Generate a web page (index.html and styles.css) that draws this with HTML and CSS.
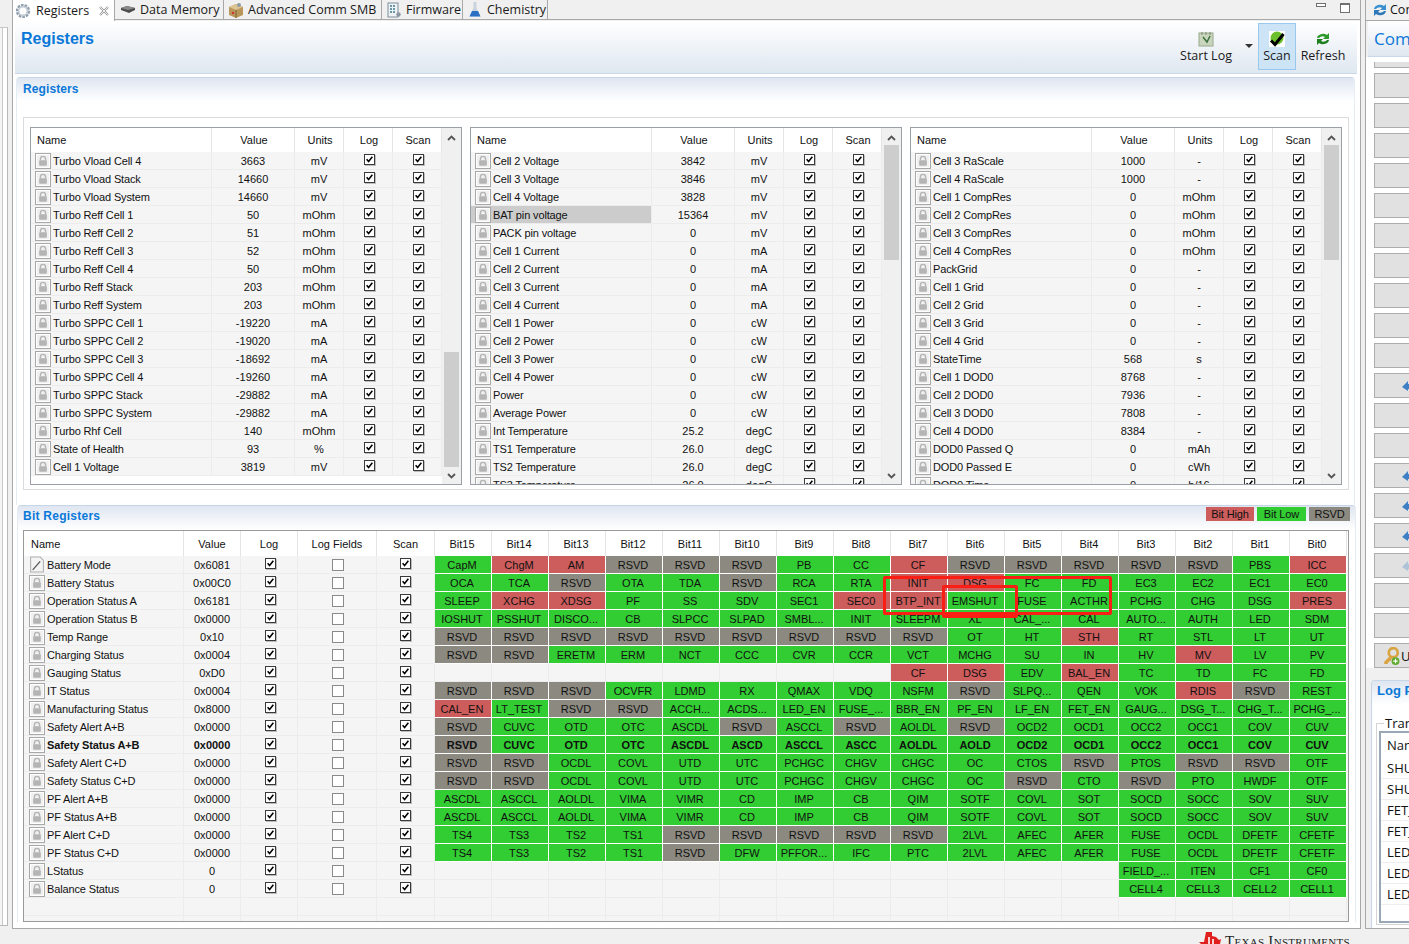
FILE: index.html
```html
<!DOCTYPE html>
<html lang="en">
<head>
<meta charset="utf-8">
<title>Registers</title>
<link rel="stylesheet" href="styles.css">
</head>
<body>
<svg class="defs" width="0" height="0">
  <symbol id="lock" viewBox="0 0 14 14"><path d="M4 6.5V4.6a3 3 0 0 1 6 0v1.9" fill="none" stroke="#b4b4b4" stroke-width="1.6"/><rect x="2.5" y="6" width="9" height="6.5" rx="1" fill="#b4b4b4"/></symbol>
  <symbol id="pencil" viewBox="0 0 14 16"><path d="M1 1h9l3 3v11H1z" fill="#f4f4f4" stroke="#b0b0b0"/><path d="M3 13 10 5" stroke="#555" stroke-width="1.2"/></symbol>
  <symbol id="tick" viewBox="0 0 11 11"><path d="M2 5.2 4.4 8 9 2.2" fill="none" stroke="#000" stroke-width="1.9"/></symbol>
  <symbol id="chev" viewBox="0 0 9 6"><path d="M1 5 4.5 1.5 8 5" fill="none" stroke="#555" stroke-width="1.8"/></symbol>
  <symbol id="arrow" viewBox="0 0 12 12"><path d="M1 7 7 1v3h5v5H7v2z" fill="#3f7fc4"/></symbol>
</svg>
<div class="app">
  <div class="workspace">
    <aside class="stub"><div class="stub-box"></div></aside>

    <main class="editor">
      <nav class="tabbar">
        <div class="tab tab-active tab-w1">
          <svg class="tab-icon" viewBox="0 0 16 16"><circle cx="8" cy="8" r="5.6" fill="none" stroke="#8a9aa8" stroke-width="3" stroke-dasharray="2.4 1"/><circle cx="8" cy="8" r="4.4" fill="none" stroke="#c3ccd4" stroke-width="1.6"/></svg>
          <span>Registers</span>
          <svg class="tab-close" viewBox="0 0 10 10"><path d="M1 1l8 8M9 1 1 9" stroke="#9a9a9a" stroke-width="2.2" fill="none"/><path d="M1 1l8 8M9 1 1 9" stroke="#fff" stroke-width=".8" fill="none"/></svg>
        </div>
        <div class="tab tab-w2">
          <svg class="tab-icon" viewBox="0 0 16 16"><path d="M1 6l6-2 8 2v2l-6 3-8-3z" fill="#4c4c4c"/><path d="M1 6l6-2 8 2-7 2z" fill="#8a8a8a"/></svg>
          <span>Data Memory</span>
        </div>
        <div class="tab tab-w3">
          <svg class="tab-icon" viewBox="0 0 16 16"><path d="M1 5l7-3 7 3v8l-7 3-7-3z" fill="#b9975b"/><path d="M1 5l7 3 7-3-7-3z" fill="#dcc592"/><path d="M8 8v8" stroke="#7d6232"/><circle cx="11" cy="3" r="2" fill="#8e9aa5"/><circle cx="5" cy="11" r="1.2" fill="#c33"/></svg>
          <span>Advanced Comm SMB</span>
        </div>
        <div class="tab tab-w4">
          <svg class="tab-icon" viewBox="0 0 16 16"><rect x="2" y="1" width="10" height="14" fill="#eef2f5" stroke="#7f8e9b"/><path d="M4 4h6M4 7h6M4 10h6" stroke="#3b7a8f" stroke-width="1.4" stroke-dasharray="2 1"/><circle cx="12.5" cy="12.5" r="2.2" fill="#8a97a3"/></svg>
          <span>Firmware</span>
        </div>
        <div class="tab tab-w5">
          <svg class="tab-icon" viewBox="0 0 16 16"><path d="M6.5 0h3v6l4 8.500H2.500l4-8.500z" fill="#c9d3dd"/><path d="M5 9h6l2.500 5.500h-11z" fill="#2a6fc4"/></svg>
          <span>Chemistry</span>
        </div>
        <div class="tabbar-fill">
          <span class="win-min"></span>
          <span class="win-max"></span>
        </div>
      </nav>

      <div class="pane">
        <header class="page-head">
          <h1 class="page-title">Registers</h1>
          <div class="toolbar">
            <div class="tool tool-log">
              <svg class="tool-icon" viewBox="0 0 16 16"><rect x="1" y="2" width="14" height="13" fill="#c9d6bd" stroke="#98a88c"/><path d="M4 1v3M8 1v3M12 1v3" stroke="#7b8a70"/><path d="M5 6l4 5 3-6" fill="none" stroke="#3c6f3c" stroke-width="1.5"/></svg>
              <span>Start Log</span>
            </div>
            <div class="tool-drop"></div>
            <div class="tool tool-on">
              <svg class="tool-icon" viewBox="0 0 16 16"><rect width="16" height="16" fill="#fff"/><circle cx="8" cy="7" r="6.500" fill="#6cc02a"/><path d="M2 9.500 6 13.500 14.500 3" fill="none" stroke="#000" stroke-width="3"/></svg>
              <span>Scan</span>
            </div>
            <div class="tool tool-refresh">
              <svg class="tool-icon" viewBox="0 0 16 16"><path d="M2 7a6 4.500 0 0 1 10-3l2-2v6H8l2-2a4 3 0 0 0-6 1z" fill="#2b9a2b"/><path d="M14 9a6 4.500 0 0 1-10 3l-2 2V8h6l-2 2a4 3 0 0 0 6-1z" fill="#1f7f1f"/></svg>
              <span>Refresh</span>
            </div>
          </div>
        </header>

        <section class="panel panel-reg">
          <div class="panel-title"><h2>Registers</h2></div>
          <div class="reg-box" id="regBox"></div>
        </section>

        <section class="panel panel-bit">
          <div class="panel-title">
            <h2>Bit Registers</h2>
            <div class="legend">
              <span class="chip chip-high red">Bit High</span>
              <span class="chip chip-low green">Bit Low</span>
              <span class="chip chip-rsvd grey">RSVD</span>
            </div>
          </div>
          <div class="bit-table" id="bitTable"></div>
        </section>
      </div>
    </main>

    <aside class="side">
      <div class="side-tabbar">
        <svg class="side-tab-icon" viewBox="0 0 16 16"><path d="M2 7a6 5 0 0 1 10-3l2-2v6H8l2-2a4 3 0 0 0-6 1z" fill="#3a8fd0"/><path d="M14 9a6 5 0 0 1-10 3l-2 2V8h6l-2 2a4 3 0 0 0 6-1z" fill="#2c78b8"/></svg>
        <span>Commands</span>
      </div>
      <div class="side-head">Commands</div>
      <div class="cmd-list" id="cmdList"></div>
      <section class="log-panel">
        <div class="log-title">Log Panel</div>
        <div class="log-group">
          <span class="log-legend">Transaction Log</span>
          <div class="log-table" id="logTable"></div>
        </div>
      </section>
    </aside>
  </div>

  <footer class="footer">
    <svg class="ti-logo" viewBox="0 0 22 20"><path d="M7 0h6v4l4 1 3 3 2-1-1 5-5 4-1 4-4-3-2-4-3-1-2 2-4-4h5z" fill="#e0201c"/><path d="M10 5v9M14 7v7" stroke="#fff" stroke-width="1.600"/></svg>
    <span class="ti-name">Texas Instruments</span>
  </footer>

  <div class="mark mark-wide"></div>
  <div class="mark mark-narrow"></div>
</div>
<script src="script.js"></script>
</body>
</html>
```
FILE: styles.css
```css
* { box-sizing: border-box; }
html, body { margin: 0; height: 100%; }
body {
  width: 1409px;
  height: 944px;
  overflow: hidden;
  background: #f0f0f0;
  font-family: "Liberation Sans", Arial, sans-serif;
  font-size: 11px;
  color: #111;
}
.defs { position: absolute; }
.app { position: relative; width: 1409px; height: 944px; overflow: hidden; }
.workspace { display: flex; height: 929px; }

/* left stub */
.stub { width: 12px; flex: none; padding-top: 27px; }
.stub-box { width: 8px; height: 899px; background: #f5f5f5; border-right: 1px solid #b8b8b8; border-bottom: 1px solid #b8b8b8; border-top: 1px solid #c8c8c8; box-shadow: inset -4px 0 0 #fff, inset -5px 0 0 #c8c8c8; }

/* editor */
.editor { width: 1349px; flex: none; display: flex; flex-direction: column; border-left: 1px solid #a8a8a8; border-right: 1px solid #a8a8a8; border-bottom: 1px solid #a8a8a8; }
.tabbar { display: flex; height: 21px; flex: none; font-family: "Open Sans", "Liberation Sans", sans-serif; font-size: 12.5px; color: #1a1a1a; }
.tab { display: flex; align-items: center; height: 20px; background: #f0f0f0; border-right: 1px solid #a8a8a8; border-bottom: 1px solid #a8a8a8; padding-left: 4px; flex: none; white-space: nowrap; }
.tab-active { background: #fff; height: 21px; border-bottom: 0; padding-left: 2px; }
.tab-w1 { width: 102px; }
.tab-w2 { width: 109px; padding-left: 5px; }
.tab-w3 { width: 158px; }
.tab-w4 { width: 81px; }
.tab-w5 { width: 85px; }
.tab-icon { width: 16px; height: 16px; margin-right: 4px; flex: none; }
.tab-active .tab-icon { margin-right: 5px; }
.tab-close { width: 10px; height: 10px; margin-left: 10px; flex: none; }
.tabbar-fill { flex: 1; height: 20px; border-bottom: 1px solid #a8a8a8; display: flex; justify-content: flex-end; align-items: flex-start; padding-right: 10px; gap: 14px; }
.win-min { width: 10px; height: 4px; margin-top: 3px; border: 1px solid #707070; background: #fff; }
.win-max { width: 10px; height: 10px; margin-top: 3px; border: 1px solid #707070; border-top-width: 2px; background: #fff; }

.pane { flex: 1; background: #fff; padding: 0 3px 0 2px; display: flex; flex-direction: column; min-height: 0; }
.page-head { height: 53px; flex: none; display: flex; justify-content: space-between; background: linear-gradient(#ffffff, #dfe7f0); border-bottom: 1px solid #c8d8e8; }
.page-title { margin: 8px 0 0 6px; font-size: 16px; line-height: 20px; font-weight: bold; color: #0a78d8; }
.toolbar { display: flex; align-items: flex-start; padding: 2px 9px 0 0; font-family: "Open Sans", "Liberation Sans", sans-serif; font-size: 12.5px; color: #1a1a1a; }
.tool { height: 47px; display: flex; flex-direction: column; align-items: center; padding-top: 7px; border: 1px solid transparent; white-space: nowrap; }
.tool span { line-height: 17px; }
.tool-icon { width: 16px; height: 16px; flex: none; }
.tool-log { width: 60px; }
.tool-drop { width: 0; height: 0; margin: 21px 5px 0 9px; border-left: 4px solid transparent; border-right: 4px solid transparent; border-top: 4px solid #333; flex: none; }
.tool-on { width: 38px; background: #cde4f7; border-color: #99c8ee; }
.tool-refresh { width: 50px; margin-left: 2px; }

/* panels */
.panel { flex: none; border: 1px solid #c6d6e6; border-bottom: 0; border-radius: 4px 4px 0 0; }
.panel-title { display: flex; justify-content: space-between; background: linear-gradient(#dfe6f1, #ffffff); }
.panel-title h2 { margin: 0; font-size: 12px; font-weight: bold; color: #0a78d8; letter-spacing: .1px; }
.panel-reg { margin: 3px 2px 0 1px; height: 428px; border-left-color: #e4ecf4; border-right-color: #e4ecf4; }
.panel-reg .panel-title { height: 23px; padding: 4px 0 0 6px; }
.reg-box { margin: 16px 5px 0 6px; height: 373px; border: 1px solid #dcdcdc; padding: 9px 6px 0 6px; display: flex; gap: 8px; }
.panel-bit { margin-top: 0; margin-left: 2px; margin-right: 1px; height: 417px; border-left-color: #e4ecf4; border-right-color: #e4ecf4; }
.panel-bit .panel-title { height: 24px; padding: 3px 0 0 5px; }
.panel-bit h2 { letter-spacing: .25px; }
.legend { display: flex; gap: 3px; margin: -2px 5px 0 0; }
.chip { height: 14px; line-height: 14px; font-size: 11px; text-align: center; letter-spacing: -.1px; }
.chip-high { width: 48px; }
.chip-low { width: 49px; }
.chip-rsvd { width: 41px; }
.red { background: #cd5c5c; }
.green { background: #32cd32; }
.grey { background: #8b8980; }

/* register tables */
.reg-table { width: 432px; height: 358px; flex: none; border: 1px solid #9aa0a6; display: flex; overflow: hidden; }
.reg-body { width: 411px; flex: none; }
.reg-row { display: grid; grid-template-columns: 181px 83px 49px 49px 49px; height: 18px; background: #f5f5f5; }
.reg-head { height: 24px; background: #fff; }
.cell { display: flex; align-items: center; justify-content: center; border-right: 1px solid #ececec; border-bottom: 1px solid #ececec; white-space: nowrap; overflow: hidden; }
.head-cell { background: #fff; border-bottom: 0; border-right: 1px solid #e4e4e4; }
.reg-head .head-cell { padding-left: 2px; }
.reg-head .name-head { justify-content: flex-start; padding-left: 6px; }
.name-cell { justify-content: flex-start; padding-left: 4px; gap: 2px; letter-spacing: -.14px; }
.cell-cb { padding-left: 2px; }
.selected { background: #cccccc; }
.lock-btn { width: 16px; height: 16px; flex: none; display: flex; align-items: center; justify-content: center; background: #f0f0f0; border: 1px solid #a8a8a8; box-shadow: inset 0 0 0 1px #fff; }
.lock-btn svg { width: 12px; height: 12px; }
.page-btn { width: 16px; height: 17px; flex: none; }
.page-btn svg { width: 16px; height: 17px; display: block; }
.cb { width: 11px; height: 11px; flex: none; margin-bottom: 3px; background: #fff; border: 1px solid #3a3a3a; box-shadow: 1px 1px 0 #bdbdbd; }
.cb svg { width: 9px; height: 9px; display: block; }
.cb-empty { width: 12px; height: 12px; margin-bottom: 0; border-color: #8a8a8a; box-shadow: none; }

/* scrollbar */
.scroll { flex: 1; background: #f0f0f0; display: flex; flex-direction: column; align-items: center; }
.scroll-btn { width: 9px; height: 6px; flex: none; margin: 7px 0 4px; }
.scroll-down { transform: rotate(180deg); margin: 6px 0 5px; }
.track { flex: 1; width: 100%; padding: 0 2px; display: flex; flex-direction: column; }
.track-end { justify-content: flex-end; }
.thumb { height: 115px; background: #cdcdcd; flex: none; }

/* bit table */
.bit-table { margin-left: 5px; margin-right: 6px; height: 392px; border: 1px solid #9a9a9a; overflow: hidden; background: #f5f5f5; }
.bit-row { display: grid; grid-template-columns: 160px 57px 57px 79px 58px repeat(16, 57px); height: 18px; }
.bit-head { height: 25px; background: #fff; }
.bit-name { justify-content: flex-start; padding-left: 5px; gap: 2px; letter-spacing: -.14px; }
.bit-name-head { justify-content: flex-start; padding-left: 7px; }
.bit-head-cell { padding-right: 2px; }
.bit { border-right: 1px solid #ececec; border-bottom: 1px solid #ececec; padding-right: 2px; display: flex; align-items: center; justify-content: center; white-space: nowrap; overflow: hidden; }
.bit.red, .bit.green, .bit.grey { border-color: #fff; }
.strong { font-weight: bold; }

/* side */
.side { flex: 1; margin-left: 4px; min-width: 0; overflow: hidden; border-left: 1px solid #a8a8a8; display: flex; flex-direction: column; border-bottom: 1px solid #a8a8a8; font-family: "Open Sans", "Liberation Sans", sans-serif; }
.side-tabbar { height: 21px; flex: none; display: flex; align-items: center; padding: 0 0 1px 6px; gap: 2px; border-bottom: 1px solid #a8a8a8; font-size: 12.5px; white-space: nowrap; }
.side-tab-icon { width: 16px; height: 16px; flex: none; }
.side-head { height: 36px; flex: none; margin-left: 2px; padding: 7px 0 0 6px; line-height: 22px; font-size: 17px; color: #0a78d8; background: linear-gradient(#fff, #dfe7f0); border-bottom: 1px solid #c8d8e8; white-space: nowrap; }
.cmd-list { flex: none; height: 611px; padding: 5px 0 0 8px; display: flex; flex-direction: column; gap: 5px; overflow: hidden; background: #fff; }
.cmd { flex: none; height: 25px; margin-right: -20px; background: #e1e1e1; border: 1px solid #adadad; display: flex; align-items: center; padding-left: 29px; font-size: 13px; white-space: nowrap; }
.cmd-cut { height: 6px; border-top: 0; }
.cmd svg { width: 12px; height: 12px; flex: none; margin-left: -3px; }
.cmd-key { padding-left: 7px; gap: 1px; }
.cmd-key svg { width: 18px; height: 18px; margin: 0; }
.cmd-faint svg { opacity: .3; }
.log-panel { flex: 1; margin: 12px 0 0 5px; border: 1px solid #c6d6e6; border-right: 0; border-bottom: 0; border-radius: 4px 0 0 0; background: #fff; overflow: hidden; }
.log-title { height: 24px; padding: 1px 0 0 5px; font-family: "Liberation Sans", sans-serif; font-size: 13px; font-weight: bold; color: #0a78d8; background: linear-gradient(#dfe6f1, #fff); white-space: nowrap; line-height: 18px; }
.log-group { position: relative; margin: 18px 0 0 4px; height: 202px; border: 1px solid #d4d4d4; border-right: 0; padding: 7px 0 0 2px; }
.log-legend { position: absolute; left: 7px; top: -9px; background: #fff; padding: 0 1px; line-height: 16px; font-size: 13px; white-space: nowrap; }
.log-table { height: 192px; border: 2px solid #9aa7b5; border-right: 0; background: #fff; font-size: 13px; overflow: hidden; white-space: nowrap; }
.log-row { height: 21px; line-height: 20px; padding-left: 6px; border-bottom: 1px solid #eeeeee; }
.log-row-head { height: 25px; line-height: 24px; border-bottom: 0; }

/* footer */
.footer { height: 15px; display: flex; justify-content: flex-end; align-items: flex-start; padding: 3px 59px 0 0; gap: 4px; overflow: hidden; }
.ti-logo { width: 22px; height: 20px; flex: none; }
.ti-name { font-family: "Liberation Serif", serif; font-variant: small-caps; font-size: 15px; letter-spacing: .3px; line-height: 16px; color: #222; white-space: nowrap; margin-top: 1px; }

/* hand-drawn annotation */
.mark { position: absolute; border: 3px solid #fb1e14; border-radius: 2px; pointer-events: none; }
.mark-wide { left: 883px; top: 576px; width: 229px; height: 39px; }
.mark-narrow { left: 942px; top: 585px; width: 76px; height: 33px; }
```
FILE: script.js
```javascript
var REGS = [
  {thumb: "end", rows: [
    ["Turbo Vload Cell 4","3663","mV"],["Turbo Vload Stack","14660","mV"],["Turbo Vload System","14660","mV"],
    ["Turbo Reff Cell 1","50","mOhm"],["Turbo Reff Cell 2","51","mOhm"],["Turbo Reff Cell 3","52","mOhm"],
    ["Turbo Reff Cell 4","50","mOhm"],["Turbo Reff Stack","203","mOhm"],["Turbo Reff System","203","mOhm"],
    ["Turbo SPPC Cell 1","-19220","mA"],["Turbo SPPC Cell 2","-19020","mA"],["Turbo SPPC Cell 3","-18692","mA"],
    ["Turbo SPPC Cell 4","-19260","mA"],["Turbo SPPC Stack","-29882","mA"],["Turbo SPPC System","-29882","mA"],
    ["Turbo Rhf Cell","140","mOhm"],["State of Health","93","%"],["Cell 1 Voltage","3819","mV"]
  ]},
  {thumb: "start", rows: [
    ["Cell 2 Voltage","3842","mV"],["Cell 3 Voltage","3846","mV"],["Cell 4 Voltage","3828","mV"],
    ["BAT pin voltage","15364","mV",1],["PACK pin voltage","0","mV"],["Cell 1 Current","0","mA"],
    ["Cell 2 Current","0","mA"],["Cell 3 Current","0","mA"],["Cell 4 Current","0","mA"],
    ["Cell 1 Power","0","cW"],["Cell 2 Power","0","cW"],["Cell 3 Power","0","cW"],["Cell 4 Power","0","cW"],
    ["Power","0","cW"],["Average Power","0","cW"],["Int Temperature","25.2","degC"],
    ["TS1 Temperature","26.0","degC"],["TS2 Temperature","26.0","degC"],["TS3 Temperature","26.0","degC"]
  ]},
  {thumb: "start", rows: [
    ["Cell 3 RaScale","1000","-"],["Cell 4 RaScale","1000","-"],["Cell 1 CompRes","0","mOhm"],
    ["Cell 2 CompRes","0","mOhm"],["Cell 3 CompRes","0","mOhm"],["Cell 4 CompRes","0","mOhm"],
    ["PackGrid","0","-"],["Cell 1 Grid","0","-"],["Cell 2 Grid","0","-"],["Cell 3 Grid","0","-"],["Cell 4 Grid","0","-"],
    ["StateTime","568","s"],["Cell 1 DOD0","8768","-"],["Cell 2 DOD0","7936","-"],["Cell 3 DOD0","7808","-"],
    ["Cell 4 DOD0","8384","-"],["DOD0 Passed Q","0","mAh"],["DOD0 Passed E","0","cWh"],["DOD0 Time","0","h/16"]
  ]}
];

var E = "";
var BITS = [
  ["Battery Mode","0x6081","CapM !ChgM !AM RSVD RSVD RSVD PB CC !CF RSVD RSVD RSVD RSVD RSVD PBS !ICC"],
  ["Battery Status","0x00C0","OCA TCA RSVD OTA TDA RSVD RCA RTA !INIT !DSG FC FD EC3 EC2 EC1 EC0"],
  ["Operation Status A","0x6181","SLEEP !XCHG !XDSG PF SS SDV SEC1 !SEC0 !BTP_INT EMSHUT FUSE ACTHR PCHG CHG DSG !PRES"],
  ["Operation Status B","0x0000","IOSHUT PSSHUT DISCO... CB SLPCC SLPAD SMBL... INIT SLEEPM XL CAL_... CAL AUTO... AUTH LED SDM"],
  ["Temp Range","0x10","RSVD RSVD RSVD RSVD RSVD RSVD RSVD RSVD RSVD OT HT !STH RT STL LT UT"],
  ["Charging Status","0x0004","RSVD RSVD ERETM ERM NCT CCC CVR CCR VCT MCHG SU IN HV !MV LV PV"],
  ["Gauging Status","0xD0","_ _ _ _ _ _ _ _ !CF !DSG EDV !BAL_EN TC TD FC FD"],
  ["IT Status","0x0004","RSVD RSVD RSVD OCVFR LDMD RX QMAX VDQ NSFM RSVD SLPQ... QEN VOK !RDIS RSVD REST"],
  ["Manufacturing Status","0x8000","!CAL_EN LT_TEST RSVD RSVD ACCH... ACDS... LED_EN FUSE_... BBR_EN PF_EN LF_EN FET_EN GAUG... DSG_T... CHG_T... PCHG_..."],
  ["Safety Alert A+B","0x0000","RSVD CUVC OTD OTC ASCDL RSVD ASCCL RSVD AOLDL RSVD OCD2 OCD1 OCC2 OCC1 COV CUV"],
  ["Safety Status A+B","0x0000","RSVD CUVC OTD OTC ASCDL ASCD ASCCL ASCC AOLDL AOLD OCD2 OCD1 OCC2 OCC1 COV CUV",1],
  ["Safety Alert C+D","0x0000","RSVD RSVD OCDL COVL UTD UTC PCHGC CHGV CHGC OC CTOS RSVD PTOS RSVD RSVD OTF"],
  ["Safety Status C+D","0x0000","RSVD RSVD OCDL COVL UTD UTC PCHGC CHGV CHGC OC RSVD CTO RSVD PTO HWDF OTF"],
  ["PF Alert A+B","0x0000","ASCDL ASCCL AOLDL VIMA VIMR CD IMP CB QIM SOTF COVL SOT SOCD SOCC SOV SUV"],
  ["PF Status A+B","0x0000","ASCDL ASCCL AOLDL VIMA VIMR CD IMP CB QIM SOTF COVL SOT SOCD SOCC SOV SUV"],
  ["PF Alert C+D","0x0000","TS4 TS3 TS2 TS1 RSVD RSVD RSVD RSVD RSVD 2LVL AFEC AFER FUSE OCDL DFETF CFETF"],
  ["PF Status C+D","0x0000","TS4 TS3 TS2 TS1 RSVD DFW PFFOR... IFC PTC 2LVL AFEC AFER FUSE OCDL DFETF CFETF"],
  ["LStatus","0","_ _ _ _ _ _ _ _ _ _ _ _ FIELD_... ITEN CF1 CF0"],
  ["Balance Status","0","_ _ _ _ _ _ _ _ _ _ _ _ CELL4 CELL3 CELL2 CELL1"]
];

function use(id) { return '<svg><use href="#' + id + '"/></svg>'; }
var LOCK = '<span class="lock-btn">' + use("lock") + '</span>';
var PAGE = '<span class="page-btn">' + use("pencil") + '</span>';
var TICK = '<span class="cb">' + use("tick") + '</span>';
var EMPTY = '<span class="cb cb-empty"></span>';
var CHEV = '<svg class="scroll-btn"><use href="#chev"/></svg>';
var CHEV_D = '<svg class="scroll-btn scroll-down"><use href="#chev"/></svg>';

function cell(inner, cls) { return '<div class="cell' + (cls ? " " + cls : "") + '">' + inner + '</div>'; }

var regHtml = REGS.map(function (t) {
  var head = '<div class="reg-row reg-head">' +
    cell("Name", "head-cell name-head") + cell("Value", "head-cell") + cell("Units", "head-cell") +
    cell("Log", "head-cell") + cell("Scan", "head-cell") + '</div>';
  var rows = t.rows.map(function (r) {
    return '<div class="reg-row">' +
      cell(LOCK + '<span>' + r[0] + '</span>', "name-cell" + (r[3] ? " selected" : "")) +
      cell(r[1]) + cell(r[2]) + cell(TICK, "cell-cb") + cell(TICK, "cell-cb") + '</div>';
  }).join("");
  return '<div class="reg-table"><div class="reg-body">' + head + rows + '</div>' +
    '<div class="scroll">' + CHEV +
    '<div class="track' + (t.thumb === "end" ? " track-end" : "") + '"><div class="thumb"></div></div>' +
    CHEV_D + '</div></div>';
}).join("");
document.getElementById("regBox").innerHTML = regHtml;

var bitHead = '<div class="bit-row bit-head">' +
  cell("Name", "head-cell bit-name-head") + cell("Value", "head-cell") + cell("Log", "head-cell") +
  cell("Log Fields", "head-cell") + cell("Scan", "head-cell");
for (var b = 15; b >= 0; b--) { bitHead += cell("Bit" + b, "head-cell bit-head-cell"); }
bitHead += '</div>';

var bitRows = BITS.map(function (r, i) {
  var strong = r[3] ? " strong" : "";
  var html = '<div class="bit-row' + strong + '">' +
    cell((i === 0 ? PAGE : LOCK) + '<span>' + r[0] + '</span>', "bit-name") +
    cell(r[1]) + cell(TICK, "cell-cb") + cell(EMPTY, "cell-cb") + cell(TICK);
  r[2].split(" ").forEach(function (tok) {
    if (tok === "_") { html += '<div class="bit"></div>'; return; }
    var red = tok.charAt(0) === "!";
    var text = red ? tok.slice(1) : tok;
    var color = red ? "red" : (text === "RSVD" ? "grey" : "green");
    html += '<div class="bit ' + color + '">' + text + '</div>';
  });
  return html + '</div>';
}).join("");
var blank = '<div class="bit-row">' + cell(E) + cell(E) + cell(E) + cell(E) + cell(E);
for (var k = 0; k < 16; k++) { blank += '<div class="bit"></div>'; }
blank += '</div>';
document.getElementById("bitTable").innerHTML = bitHead + bitRows + blank + blank;

var cmds = "";
for (var c = 0; c < 20; c++) {
  var cut = c === 0 ? " cmd-cut" : "";
  var arrow = (c === 11 || c === 14 || c === 15 || c === 16 || c === 17) ? use("arrow") : "";
  var faint = c === 17 ? " cmd-faint" : "";
  cmds += '<div class="cmd' + cut + faint + '">' + arrow + '</div>';
}
cmds += '<div class="cmd cmd-key"><svg viewBox="0 0 16 16"><circle cx="10" cy="5" r="4" fill="none" stroke="#d9a441" stroke-width="2.400"/><path d="M7 8 2 13v2h3l1-2 2-1 1-3" fill="#d9a441"/><circle cx="12" cy="12.500" r="3.500" fill="#5cab2e"/><path d="M10 12.500h4M12 10.500v4" stroke="#fff"/></svg><span>UNSEAL</span></div>';
document.getElementById("cmdList").innerHTML = cmds;

var logs = ["SHUTDOWN","SHUTDOWN","FET_EN","FET_EN","LED_ON","LED_OFF","LED_EN"];
document.getElementById("logTable").innerHTML = '<div class="log-row log-row-head">Name</div>' +
  logs.map(function (l) { return '<div class="log-row">' + l + '</div>'; }).join("") +
  '<div class="log-row"></div>';
```
